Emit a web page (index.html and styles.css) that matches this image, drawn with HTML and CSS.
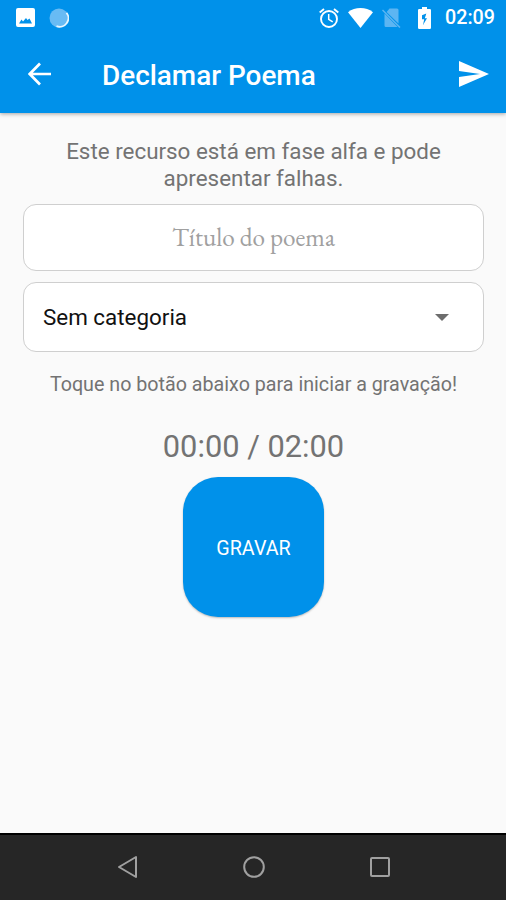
FILE: index.html
```html
<!DOCTYPE html>
<html lang="pt-BR">
<head>
    <meta charset="UTF-8">
    <meta name="viewport" content="width=device-width, initial-scale=1.0">
    <title>Declamar Poema</title>
    <link rel="stylesheet" href="styles.css">
</head>
<body>
    <header class="header">
        <div class="status-bar">
            <svg class="icon-image" viewBox="0 0 19 19">
                <path fill="#fff" fill-rule="evenodd" d="M2 0h15a2 2 0 0 1 2 2v15a2 2 0 0 1-2 2H2a2 2 0 0 1-2-2V2a2 2 0 0 1 2-2zM3 15.500h13l-2.500-5-2 1.500-1.500-2-3 3.500-1.500-2z"/>
            </svg>
            <svg class="icon-sync" viewBox="0 0 20 20">
                <circle cx="10" cy="10" r="9.500" fill="#68bbf4"/>
                <path d="M17.500 4.700A8.700 8.700 0 0 1 7.500 18.200" fill="none" stroke="#e9f7ff" stroke-width="1.800"/>
            </svg>
            <div class="status-right">
                <svg class="icon-alarm" viewBox="0 0 20 20" fill="none" stroke="#fff">
                    <circle cx="10" cy="11" r="8" stroke-width="1.900"/>
                    <path d="M.7 4.400 5 .9M19.300 4.400 15 .9" stroke-width="1.900"/>
                    <path d="M9.700 6v5.300l4 2.500" stroke-width="1.500"/>
                </svg>
                <svg class="icon-wifi" viewBox="0 0 25 20">
                    <path fill="#fff" d="M12.500 20 0 4.300C7-1.300 18-1.300 25 4.300z"/>
                </svg>
                <svg class="icon-sim" viewBox="0 0 19 20">
                    <path fill="#5cb5f2" d="M7.500 .5H15A1.500 1.500 0 0 1 16.500 2v13.500L4.600 3.900zM2.500 5.600 15.600 19H4a1.500 1.500 0 0 1-1.500-1.500z"/>
                    <path d="M.5 2 18 19.500" fill="none" stroke="#5cb5f2" stroke-width="1.500"/>
                </svg>
                <svg class="icon-battery" viewBox="0 0 13 22">
                    <path fill="#fff" fill-rule="evenodd" d="M4 0h5v2h2.800A1.200 1.200 0 0 1 13 3.200v17.600a1.200 1.200 0 0 1-1.200 1.200H1.200A1.200 1.200 0 0 1 0 20.800V3.200A1.200 1.200 0 0 1 1.200 2H4zM8.300 6.500 4 8.300v4h2.200L5 18l4-6.800H6.800z"/>
                </svg>
                <span class="clock">02:09</span>
            </div>
        </div>
        <div class="toolbar">
            <svg class="icon-back" viewBox="0 0 24 24">
                <path d="M12 1.500 1.700 12 12 22.500M2 12h21" fill="none" stroke="#fff" stroke-width="2.700"/>
            </svg>
            <h1 class="title">Declamar Poema</h1>
            <svg class="icon-send" viewBox="0 0 30 26">
                <path fill="#fff" d="M0 26 30 13 0 0v10l21 3-21 3z"/>
            </svg>
        </div>
    </header>

    <main class="content">
        <p class="notice">Este recurso está em fase alfa e pode<br>apresentar falhas.</p>
        <input class="field poem-title" type="text" placeholder="Título do poema" autocomplete="off">
        <div class="field category">
            <span class="category-name">Sem categoria</span>
            <span class="arrow"></span>
        </div>
        <p class="hint">Toque no botão abaixo para iniciar a gravação!</p>
        <div class="timer">00:00 / 02:00</div>
        <button class="record" type="button">GRAVAR</button>
    </main>

    <nav class="nav-bar">
        <svg class="nav-icon" viewBox="0 0 24 24">
            <path d="M20 2v20L3 12z"/>
        </svg>
        <svg class="nav-icon" viewBox="0 0 24 24">
            <circle cx="12" cy="12" r="9.800"/>
        </svg>
        <svg class="nav-icon" viewBox="0 0 24 24">
            <rect x="3" y="3" width="18" height="18" rx="1"/>
        </svg>
    </nav>
</body>
</html>
```

FILE: styles.css
```css
* {
    box-sizing: border-box;
}

body {
    display: flex;
    flex-direction: column;
    margin: 0;
    height: 100vh;
    overflow: hidden;
    background: #fafafa;
    font-family: Roboto, sans-serif;
    color: #737373;
}

svg {
    display: block;
    flex: none;
}

.header {
    height: 113px;
    background: #0091ea;
    color: #fff;
    box-shadow: 0 1px 4px rgba(0, 0, 0, 0.35);
}

.status-bar {
    display: flex;
    align-items: center;
    height: 35px;
    padding: 0 11px 0 16px;
}

.icon-image {
    width: 19px;
    height: 19px;
}

.icon-sync {
    width: 20px;
    height: 20px;
    margin-left: 14px;
}

.status-right {
    display: flex;
    align-items: center;
    margin-left: auto;
}

.icon-alarm {
    width: 20px;
    height: 20px;
}

.icon-wifi {
    width: 25px;
    height: 20px;
    margin-left: 9px;
}

.icon-sim {
    width: 19px;
    height: 20px;
    margin-left: 9px;
}

.icon-battery {
    width: 13px;
    height: 22px;
    margin-left: 17px;
}

.clock {
    width: 50px;
    margin: 1px 0 0 14px;
    font-size: 19.7px;
    font-weight: 500;
    line-height: 36px;
    white-space: nowrap;
}

.toolbar {
    display: flex;
    align-items: center;
    height: 78px;
    padding: 0 17px 0 28px;
}

.icon-back {
    width: 24px;
    height: 24px;
}

.title {
    margin: 3px 0 0 50px;
    font-size: 27.9px;
    font-weight: 500;
    line-height: 34px;
    white-space: nowrap;
}

.icon-send {
    width: 30px;
    height: 26px;
    margin-left: auto;
}

.content {
    display: flex;
    flex: 1;
    flex-direction: column;
    align-items: center;
    padding: 25px 22px 0 23px;
}

.notice {
    margin: 0 0 13px;
    font-size: 22.4px;
    line-height: 26.5px;
    text-align: center;
    white-space: nowrap;
}

.field {
    width: 461px;
    border: 1.500px solid #cfcfcf;
    border-radius: 13px;
    background: #fff;
}

.poem-title {
    height: 67px;
    padding: 0 10px;
    font-family: "EB Garamond", "Liberation Serif", serif;
    font-size: 25.2px;
    text-align: center;
}

.poem-title::placeholder {
    color: #a0a0a0;
    opacity: 1;
}

.category {
    display: flex;
    align-items: center;
    justify-content: space-between;
    height: 70px;
    margin-top: 11px;
    padding: 0 34px 0 19px;
}

.category-name {
    font-size: 22.4px;
    color: #111;
}

.arrow {
    border: 7px solid transparent;
    border-top-color: #6d6d6d;
    border-bottom: 0;
}

.hint {
    margin: 21px 0 0;
    font-size: 19.7px;
    line-height: 24px;
    white-space: nowrap;
}

.timer {
    margin-top: 31px;
    font-size: 30.8px;
    line-height: 38px;
    white-space: nowrap;
}

.record {
    width: 141px;
    height: 140px;
    margin-top: 11px;
    padding: 2px 0 0;
    border: 0;
    border-radius: 35px;
    background: #0091ea;
    box-shadow: 0 1px 2px rgba(0, 0, 0, 0.25);
    color: #fff;
    font-family: inherit;
    font-size: 19.7px;
}

.nav-bar {
    display: flex;
    align-items: center;
    justify-content: center;
    gap: 102px;
    height: 67px;
    padding: 0 0 2px 1px;
    border-top: 2px solid #000;
    background: #262626;
}

.nav-icon {
    width: 24px;
    height: 24px;
    fill: none;
    stroke: #a0a0a0;
    stroke-width: 2;
    stroke-linejoin: round;
}
```
